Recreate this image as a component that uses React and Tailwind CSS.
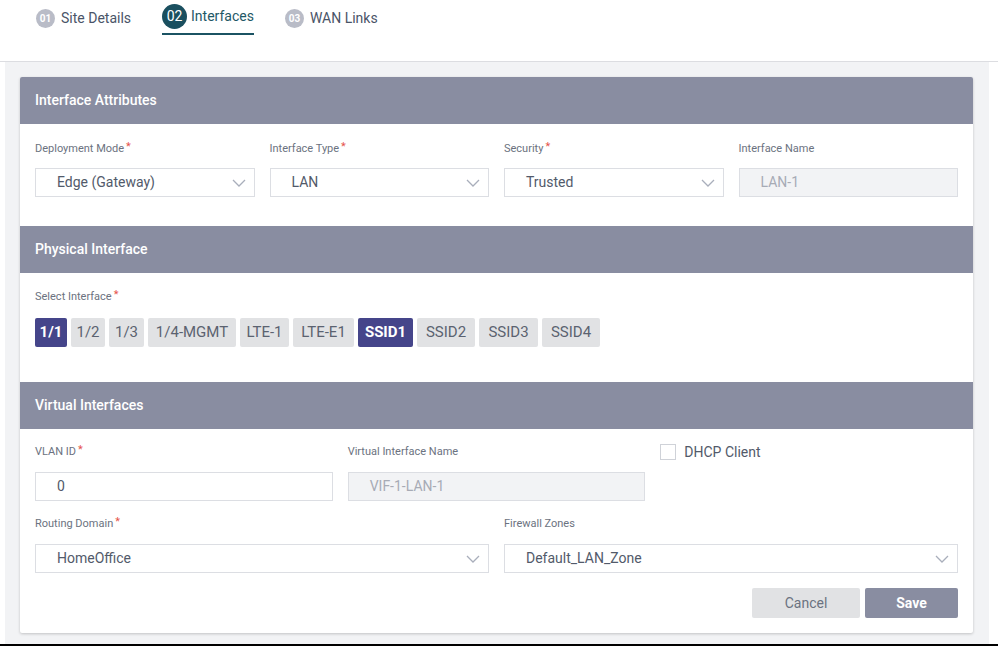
import React from "react";

const font = { fontFamily: "Roboto, 'Liberation Sans', sans-serif" };

function Chevron() {
  return (
    <svg width="14" height="8" viewBox="0 0 14 8" className="shrink-0">
      <polyline points="1,1 7,7 13,1" fill="none" stroke="#a9aebb" strokeWidth="1.3" />
    </svg>
  );
}

function Label({ children, req }) {
  return (
    <div className="h-4 text-[11px] leading-4 text-[#6b7280] flex items-start">
      <span>{children}</span>
      {req && <span className="text-[#e5534b] text-[11px] leading-3 ml-[2px]">*</span>}
    </div>
  );
}

function Select({ value }) {
  return (
    <div className="h-[29px] border border-[#dcdee3] bg-white flex items-center justify-between pl-[21px] pr-[8px]">
      <span className="text-[14px] text-[#525a6a]">{value}</span>
      <Chevron />
    </div>
  );
}

function Header({ children }) {
  return (
    <div className="h-[47px] bg-[#898da1] flex items-center px-[15px] text-white text-[14px] font-medium">
      {children}
    </div>
  );
}

const ifaces = [
  { t: "1/1", w: "w-[32px]", a: true },
  { t: "1/2", w: "w-[34px]" },
  { t: "1/3", w: "w-[35px]" },
  { t: "1/4-MGMT", w: "w-[88px]" },
  { t: "LTE-1", w: "w-[49px]" },
  { t: "LTE-E1", w: "w-[61px]" },
  { t: "SSID1", w: "w-[55px]", a: true },
  { t: "SSID2", w: "w-[58px]" },
  { t: "SSID3", w: "w-[59px]" },
  { t: "SSID4", w: "w-[58px]" },
];

export default function App() {
  return (
    <div className="w-[998px] h-[646px] bg-white overflow-hidden flex flex-col" style={font}>
      <div className="h-[62px] border-b border-[#dcdde1] flex items-start pl-[36px] gap-[31px] shrink-0">
        <div className="flex items-center gap-[6px] h-[36px]">
          <span className="w-[19px] h-[19px] rounded-full bg-[#b9bcc7] text-white text-[10px] font-bold flex items-center justify-center">01</span>
          <span className="text-[14px] text-[#4a5468]">Site Details</span>
        </div>
        <div className="flex items-center gap-[4px] h-[35px] border-b-2 border-[#1b5363] pb-[1px]">
          <span className="w-[25px] h-[25px] rounded-full bg-[#1a4f5f] text-white text-[14px] flex items-center justify-center">02</span>
          <span className="text-[14px] text-[#1e5866]">Interfaces</span>
        </div>
        <div className="flex items-center gap-[6px] h-[36px]">
          <span className="w-[19px] h-[19px] rounded-full bg-[#b9bcc7] text-white text-[10px] font-bold flex items-center justify-center">03</span>
          <span className="text-[14px] text-[#4a5468]">WAN Links</span>
        </div>
      </div>

      <div className="flex-1 flex">
        <div className="w-[5px]" />
        <div className="w-[984px] bg-[#f2f3f5] pt-[15px] pl-[15px]">
          <div className="w-[953px] h-[556px] bg-white shadow-[0_1px_3px_rgba(0,0,0,0.2)] rounded-[2px] overflow-hidden">
            <Header>Interface Attributes</Header>
            <div className="px-[15px] pt-[17px] pb-[29px] grid grid-cols-4 gap-x-[15px]">
              <div>
                <Label req>Deployment Mode</Label>
                <div className="mt-[11px]"><Select value="Edge (Gateway)" /></div>
              </div>
              <div>
                <Label req>Interface Type</Label>
                <div className="mt-[11px]"><Select value="LAN" /></div>
              </div>
              <div>
                <Label req>Security</Label>
                <div className="mt-[11px]"><Select value="Trusted" /></div>
              </div>
              <div>
                <Label>Interface Name</Label>
                <div className="mt-[11px] h-[29px] border border-[#dcdee3] bg-[#f2f3f5] flex items-center pl-[21px] text-[14px] text-[#a7abb5]">LAN-1</div>
              </div>
            </div>

            <Header>Physical Interface</Header>
            <div className="px-[15px] pt-[16px] pb-[35px]">
              <Label req>Select Interface</Label>
              <div className="mt-[13px] flex gap-[4px]">
                {ifaces.map((b) => (
                  <div
                    key={b.t}
                    className={
                      b.w +
                      " h-[29px] rounded-[2px] flex items-center justify-center text-[15px] " +
                      (b.a ? "bg-[#45458a] text-white font-bold" : "bg-[#e1e2e4] text-[#5b6270]")
                    }
                  >
                    {b.t}
                  </div>
                ))}
              </div>
            </div>

            <Header>Virtual Interfaces</Header>
            <div className="px-[15px] pt-[15px] pb-[16px]">
              <div className="grid grid-cols-3 gap-x-[15px]">
                <div>
                  <Label req>VLAN ID</Label>
                  <div className="mt-[12px] h-[29px] border border-[#dcdee3] bg-white flex items-center pl-[21px] text-[14px] text-[#525a6a]">0</div>
                </div>
                <div>
                  <Label>Virtual Interface Name</Label>
                  <div className="mt-[12px] h-[29px] border border-[#dcdee3] bg-[#f2f3f5] flex items-center pl-[21px] text-[14px] text-[#a7abb5]">VIF-1-LAN-1</div>
                </div>
                <div className="flex items-start gap-[8px]">
                  <span className="w-[16px] h-[16px] border border-[#cfd2d8] bg-white" />
                  <span className="text-[14px] leading-4 text-[#525a6a]">DHCP Client</span>
                </div>
              </div>
              <div className="grid grid-cols-2 gap-x-[15px] mt-[15px]">
                <div>
                  <Label req>Routing Domain</Label>
                  <div className="mt-[12px]"><Select value="HomeOffice" /></div>
                </div>
                <div>
                  <Label>Firewall Zones</Label>
                  <div className="mt-[12px]"><Select value="Default_LAN_Zone" /></div>
                </div>
              </div>
              <div className="flex justify-end gap-[5px] mt-[15px]">
                <div className="w-[108px] h-[30px] bg-[#e1e2e4] rounded-[2px] flex items-center justify-center text-[14px] text-[#6b7280]">Cancel</div>
                <div className="w-[93px] h-[30px] bg-[#898da1] rounded-[2px] flex items-center justify-center text-[14px] font-bold text-white">Save</div>
              </div>
            </div>
          </div>
        </div>
      </div>
      <div className="h-[2px] bg-black shrink-0" />
    </div>
  );
}
